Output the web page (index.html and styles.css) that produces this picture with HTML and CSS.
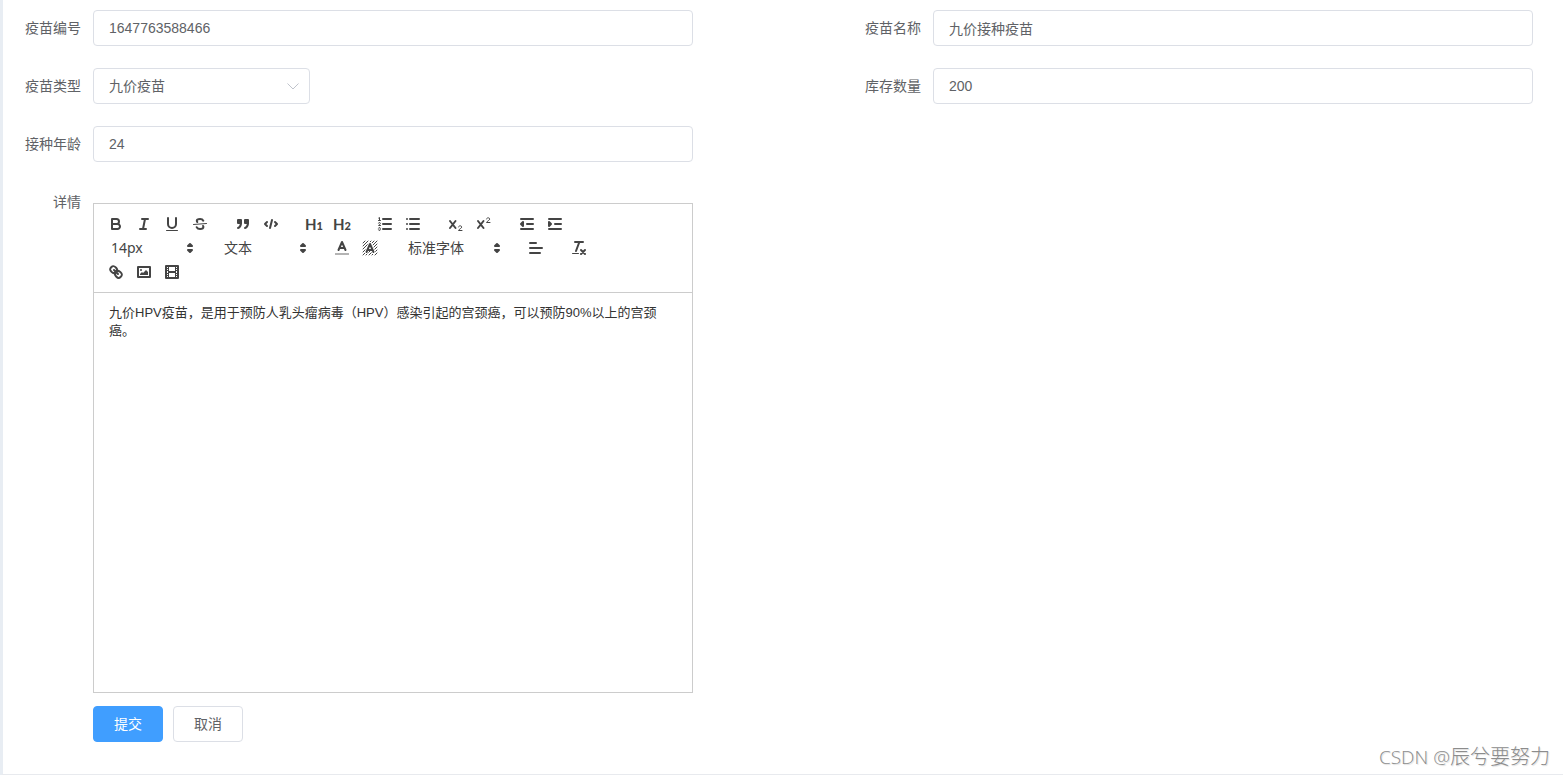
FILE: index.html
```html
<!DOCTYPE html>
<html lang="zh-CN">
<head>
<meta charset="utf-8">
<title>疫苗信息</title>
<link rel="stylesheet" href="styles.css">
</head>
<body>
<main class="page">
  <form class="form">
    <div class="field">
      <label class="label" for="code">疫苗编号</label>
      <input class="input" id="code" type="text" value="1647763588466">
    </div>
    <div class="field">
      <label class="label" for="name">疫苗名称</label>
      <input class="input" id="name" type="text" value="九价接种疫苗">
    </div>
    <div class="field">
      <label class="label" for="type">疫苗类型</label>
      <div class="select-wrap">
        <select class="input select" id="type"><option>九价疫苗</option></select>
        <svg class="chevron" viewBox="0 0 14 14"><path d="M1.500 4.500l5.500 5.500 5.500-5.500"/></svg>
      </div>
    </div>
    <div class="field">
      <label class="label" for="stock">库存数量</label>
      <input class="input" id="stock" type="text" value="200">
    </div>
    <div class="field field-row-start">
      <label class="label" for="age">接种年龄</label>
      <input class="input" id="age" type="text" value="24">
    </div>
    <div class="field field-row-start">
      <span class="label" id="detail-label">详情</span>
      <div class="editor">
        <div class="toolbar" role="toolbar">
          <div class="group">
            <button class="tool" type="button" aria-label="加粗"><svg viewBox="0 0 18 18"><path d="M5,4H9.500A2.500,2.500,0,0,1,12,6.500v0A2.500,2.500,0,0,1,9.500,9H5V4Z"/><path d="M5,9h5.500A2.500,2.500,0,0,1,13,11.500v0A2.500,2.500,0,0,1,10.500,14H5V9Z"/></svg></button>
            <button class="tool" type="button" aria-label="斜体"><svg viewBox="0 0 18 18"><path d="M7 4h6M5 14h6M8 14L10 4"/></svg></button>
            <button class="tool" type="button" aria-label="下划线"><svg viewBox="0 0 18 18"><path d="M5,3V9a4,4,0,0,0,8,0V3"/><rect class="fill" x="3" y="15" width="12" height="1" rx=".5"/></svg></button>
            <button class="tool" type="button" aria-label="删除线"><svg viewBox="0 0 18 18"><path d="M12.300 5.700C11.700 4.500 10.500 4 9.100 4 7.100 4 5.800 4.700 5.800 5.800c0 .5.200.9.500 1.200M5.700 12.200c.6 1.200 1.900 1.800 3.400 1.800 2 0 3.300-.8 3.300-2 0-.5-.1-.8-.4-1.100"/><path class="thin" d="M15.500 8.500L2.500 9.500"/></svg></button>
          </div>
          <div class="group">
            <button class="tool" type="button" aria-label="引用"><svg viewBox="0 0 18 18"><rect class="solid" x="4" y="5" width="3" height="3"/><rect class="solid" x="11" y="5" width="3" height="3"/><path class="solid" d="M7,8c0,4.031-3,5-3,5"/><path class="solid" d="M14,8c0,4.031-3,5-3,5"/></svg></button>
            <button class="tool" type="button" aria-label="代码"><svg viewBox="0 0 18 18"><path d="M5 7L3 9l2 2M13 7l2 2-2 2M10 5L8 13"/></svg></button>
          </div>
          <div class="group">
            <button class="tool heading" type="button">H<small>1</small></button>
            <button class="tool heading" type="button">H<small>2</small></button>
          </div>
          <div class="group">
            <button class="tool" type="button" aria-label="有序列表"><svg viewBox="0 0 18 18"><path d="M7 4h8M7 9h8M7 14h8"/><path class="thin" d="M2.500 5.500h2M2.700 3l.8-.5v3M4.500,10.500h-2c0-.234,1.850-1.076,1.850-2.234A.959.959,0,0,0,2.500,8.156M2.500,14.846a.959.959,0,0,0,1.850-.109A.7.7,0,0,0,3.750,14a.688.688,0,0,0,.6-.736.959.959,0,0,0-1.850-.109"/></svg></button>
            <button class="tool" type="button" aria-label="无序列表"><svg viewBox="0 0 18 18"><path d="M6 4h9M6 9h9M6 14h9M3 4h0M3 9h0M3 14h0"/></svg></button>
          </div>
          <div class="group">
            <button class="tool" type="button" aria-label="下标"><svg viewBox="0 0 18 18"><path d="M3 6l5.500 7M8.500 6L3 13"/><path class="thin" d="M11.500 11.900c.2-1.500 3.200-1.500 3.200.2 0 1.200-2.600 1.900-3.200 3.400h3.500"/></svg></button>
            <button class="tool" type="button" aria-label="上标"><svg viewBox="0 0 18 18"><path d="M3 6l5.500 7M8.500 6L3 13"/><path class="thin" d="M11.500 3.900c.2-1.500 3.200-1.500 3.200.2 0 1.200-2.600 1.900-3.200 3.400h3.500"/></svg></button>
          </div>
          <div class="group">
            <button class="tool" type="button" aria-label="减少缩进"><svg viewBox="0 0 18 18"><path d="M3 14h12M3 4h12M9 9h6"/><path class="solid" d="M5 7v4L3 9z"/></svg></button>
            <button class="tool" type="button" aria-label="增加缩进"><svg viewBox="0 0 18 18"><path d="M3 14h12M3 4h12M9 9h6"/><path class="solid" d="M3 7v4l2-2z"/></svg></button>
          </div>
          <div class="group">
            <div class="picker">
              <select class="picker-select" aria-label="字号"><option>14px</option></select>
              <svg class="updown" viewBox="0 0 18 18"><path class="solid" d="M7 11l2 2 2-2zM7 7l2-2 2 2z"/></svg>
            </div>
          </div>
          <div class="group">
            <div class="picker">
              <select class="picker-select" aria-label="段落格式"><option>文本</option></select>
              <svg class="updown" viewBox="0 0 18 18"><path class="solid" d="M7 11l2 2 2-2zM7 7l2-2 2 2z"/></svg>
            </div>
          </div>
          <div class="group">
            <button class="tool" type="button" aria-label="文字颜色"><svg viewBox="0 0 18 18"><path class="faint" d="M2 15h14"/><path d="M5.500 11L9 3l3.500 8M7 9h4"/></svg></button>
            <button class="tool" type="button" aria-label="背景颜色"><svg viewBox="0 0 18 18"><path class="hatch" d="M2 4l2-2M2 7l5-5M2 10l8-8M2 13l11-11M2 16L16 2M5 16L16 5M8 16l8-8M11 16l5-5M14 16l2-2"/><path class="halo" d="M5.500 13L9 5l3.500 8"/><path d="M5.500 13L9 5l3.500 8M7 11h4"/></svg></button>
          </div>
          <div class="group">
            <div class="picker picker-font">
              <select class="picker-select" aria-label="字体"><option>标准字体</option></select>
              <svg class="updown" viewBox="0 0 18 18"><path class="solid" d="M7 11l2 2 2-2zM7 7l2-2 2 2z"/></svg>
            </div>
          </div>
          <div class="group">
            <button class="tool" type="button" aria-label="对齐"><svg viewBox="0 0 18 18"><path d="M3 9h12M3 14h10M3 4h6"/></svg></button>
          </div>
          <div class="group">
            <button class="tool" type="button" aria-label="清除格式"><svg viewBox="0 0 18 18"><path d="M5 3h8M6 12L9.350 3M11 11l4 4M15 11l-4 4"/><rect class="fill" x="2" y="14" width="7" height="1" rx=".5"/></svg></button>
          </div>
          <div class="group">
            <button class="tool" type="button" aria-label="链接"><svg viewBox="0 0 18 18"><path d="M7 7l4 4M8.900,4.577a3.476,3.476,0,0,1,.36,4.679A3.476,3.476,0,0,1,4.577,8.900C3.185,7.500,2.035,6.400,4.217,4.217S7.500,3.185,8.900,4.577Z"/><path d="M13.423,9.100a3.476,3.476,0,0,0-4.679-.36,3.476,3.476,0,0,0,.36,4.679c1.392,1.392,2.500,2.542,4.679.36S14.815,10.500,13.423,9.100Z"/></svg></button>
            <button class="tool" type="button" aria-label="图片"><svg viewBox="0 0 18 18"><rect x="3" y="4" width="12" height="10"/><circle class="fill" cx="6" cy="7" r="1"/><path class="fill" d="M5 12v-1l2-2 1 1 3-3 2 2v3z"/></svg></button>
            <button class="tool" type="button" aria-label="视频"><svg viewBox="0 0 18 18"><rect x="3" y="3" width="12" height="12"/><path class="fill" d="M5 3h1v12H5zM12 3h1v12h-1zM5 8h8v2H5zM3 5h3v1H3zM3 7h3v1H3zM3 10h3v1H3zM3 12h3v1H3zM12 5h3v1h-3zM12 7h3v1h-3zM12 10h3v1h-3zM12 12h3v1h-3z"/></svg></button>
          </div>
        </div>
        <div class="content" contenteditable="true" spellcheck="false" role="textbox" aria-labelledby="detail-label"><p>九价HPV疫苗，是用于预防人乳头瘤病毒（HPV）感染引起的宫颈癌，可以预防90%以上的宫颈癌。</p></div>
      </div>
    </div>
    <div class="actions">
      <button class="btn btn-primary" type="submit">提交</button>
      <button class="btn" type="button">取消</button>
    </div>
  </form>
  <div class="watermark"><span class="watermark-site">CSDN @</span>辰兮要努力</div>
</main>
</body>
</html>
```

FILE: styles.css
```css
* {
  box-sizing: border-box;
}

body {
  margin: 0;
  background: #fff;
  color: #606266;
  font: 14px/20px "Liberation Sans", "Noto Sans CJK SC", sans-serif;
}

button,
input,
select {
  font: inherit;
  color: inherit;
}

.page {
  position: relative;
  min-height: 100vh;
  padding: 10px 30px 32px 10px;
  border-left: 3px solid #e8edf3;
  border-bottom: 1px solid #e8eaee;
}

.form {
  display: grid;
  grid-template-columns: 1fr 1fr;
  gap: 22px 160px;
}

.field {
  display: flex;
  align-items: flex-start;
}

.field-row-start {
  grid-column: 1;
}

.label {
  flex: none;
  width: 80px;
  padding-right: 12px;
  line-height: 36px;
  text-align: right;
}

.input {
  flex: 1;
  min-width: 0;
  width: 100%;
  height: 36px;
  padding: 0 15px;
  border: 1px solid #dcdfe6;
  border-radius: 4px;
  background: #fff;
  outline: none;
}

.select-wrap {
  position: relative;
  width: 217px;
}

.select {
  display: block;
  appearance: none;
}

.chevron {
  position: absolute;
  top: 11px;
  right: 10px;
  width: 14px;
  height: 14px;
  fill: none;
  stroke: #c0c4cc;
  pointer-events: none;
}

.editor {
  flex: 1;
  min-width: 0;
  margin-top: 19px;
  border: 1px solid #ccc;
}

.toolbar {
  display: flex;
  flex-wrap: wrap;
  padding: 8px;
  border-bottom: 1px solid #ccc;
  color: #444;
}

.group {
  display: flex;
  margin-right: 15px;
}

.tool {
  display: block;
  width: 28px;
  height: 24px;
  padding: 3px 5px;
  border: 0;
  background: none;
  cursor: pointer;
}

.tool svg,
.updown {
  display: block;
  width: 18px;
  height: 18px;
  fill: none;
  stroke: #444;
  stroke-width: 2;
  stroke-linecap: round;
  stroke-linejoin: round;
}

.tool .fill {
  fill: #444;
  stroke: none;
}

.solid {
  fill: #444;
}

.tool .thin {
  stroke-width: 1;
}

.tool .faint {
  opacity: .4;
  stroke-linecap: butt;
}

.tool .hatch {
  stroke-width: 1;
}

.tool .halo {
  stroke: #fff;
  stroke-width: 4;
}

.heading {
  padding: 3px 0 3px 5px;
  font: 700 15px/18px Lato, sans-serif;
  text-align: left;
  white-space: nowrap;
}

.heading small {
  font-size: 11px;
  font-weight: 900;
}

.picker {
  position: relative;
  width: 98px;
  height: 24px;
}

.picker-font {
  width: 108px;
}

.picker-select {
  width: 100%;
  height: 24px;
  padding: 0 20px 0 8px;
  border: 1px solid transparent;
  background: none;
  appearance: none;
  font-family: "Noto Sans", "Noto Sans CJK SC", sans-serif;
  outline: none;
}

.updown {
  position: absolute;
  top: 3px;
  right: 1px;
  pointer-events: none;
}

.content {
  min-height: 399px;
  padding: 11px 15px;
  color: #333;
  font: 13px/18px "Liberation Sans", "Noto Sans CJK SC", sans-serif;
  text-spacing-trim: space-all;
  outline: none;
}

.content p {
  margin: 0;
}

.actions {
  display: flex;
  grid-column: 1;
  gap: 10px;
  margin-top: -9px;
  padding-left: 80px;
}

.btn {
  width: 70px;
  height: 36px;
  padding: 0;
  border: 1px solid #dcdfe6;
  border-radius: 4px;
  background: #fff;
  cursor: pointer;
}

.btn-primary {
  border-color: #409eff;
  background: #409eff;
  color: #fff;
}

.watermark {
  position: absolute;
  right: 13px;
  bottom: 3px;
  color: #8c8c8c;
  font: 300 20px/28px "Noto Sans CJK SC", sans-serif;
  text-shadow: 1px 1px 1px #ddd;
  pointer-events: none;
}

.watermark-site {
  font-family: "Open Sans", "Noto Sans", sans-serif;
  font-size: 19px;
}
```
